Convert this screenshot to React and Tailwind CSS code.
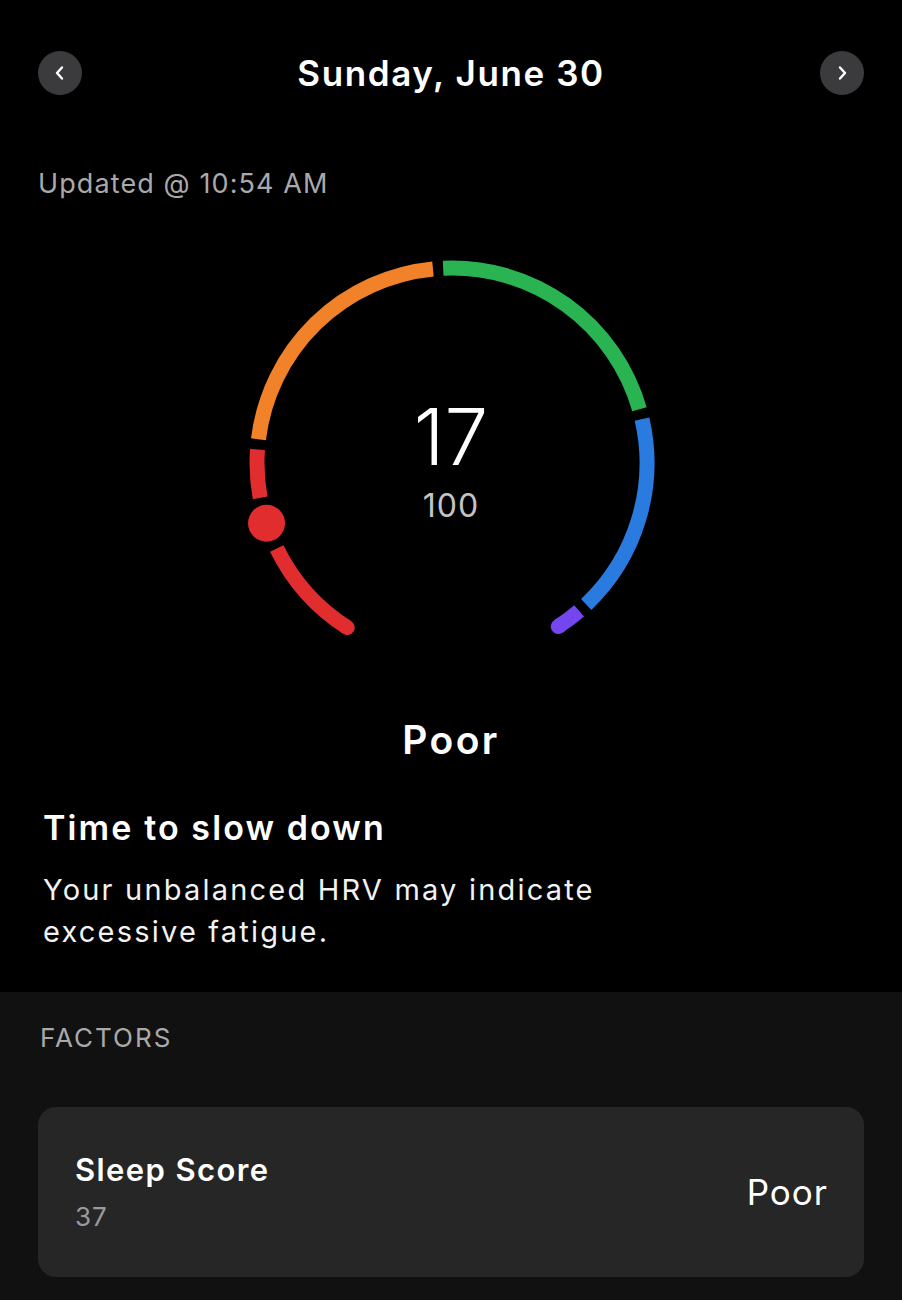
import React from "react";

const CX = 221;
const CY = 223;
const R = 195;

function pt(deg) {
  const r = (deg * Math.PI) / 180;
  return [CX + R * Math.sin(r), CY - R * Math.cos(r)];
}

function arc(a1, a2) {
  const [x1, y1] = pt(a1);
  const [x2, y2] = pt(a2);
  const large = a2 - a1 > 180 ? 1 : 0;
  return `M ${x1.toFixed(2)} ${y1.toFixed(2)} A ${R} ${R} 0 ${large} 1 ${x2.toFixed(2)} ${y2.toFixed(2)}`;
}

function Gauge() {
  const sw = 15;
  const dot = pt(-108);
  return (
    <svg width="440" height="420" viewBox="0 0 440 420" className="block">
      <path d={arc(-147.5, -116)} stroke="#e22d2f" strokeWidth={sw} fill="none" strokeLinecap="butt" />
      <path d={arc(-147.5, -147)} stroke="#e22d2f" strokeWidth={sw} fill="none" strokeLinecap="round" />
      <path d={arc(-100.3, -86)} stroke="#e22d2f" strokeWidth={sw} fill="none" />
      <path d={arc(-83, -5.6)} stroke="#f2822a" strokeWidth={sw} fill="none" />
      <path d={arc(-2.6, 74)} stroke="#29b451" strokeWidth={sw} fill="none" />
      <path d={arc(77, 136.5)} stroke="#2a7be0" strokeWidth={sw} fill="none" />
      <path d={arc(139.3, 147)} stroke="#7446ee" strokeWidth={sw} fill="none" strokeLinecap="butt" />
      <path d={arc(146.5, 147)} stroke="#7446ee" strokeWidth={sw} fill="none" strokeLinecap="round" />
      <circle cx={dot[0]} cy={dot[1]} r="18.5" fill="#e22d2f" />
    </svg>
  );
}

function NavButton({ dir }) {
  return (
    <button className="w-[44px] h-[44px] rounded-full bg-[#3b3b3d] flex items-center justify-center">
      <svg width="14" height="16" viewBox="0 0 14 16">
        {dir === "left" ? (
          <path d="M9 2.5 L4 8 L9 13.5" stroke="#ffffff" strokeWidth="2.4" fill="none" strokeLinecap="round" strokeLinejoin="round" />
        ) : (
          <path d="M5 2.5 L10 8 L5 13.5" stroke="#ffffff" strokeWidth="2.4" fill="none" strokeLinecap="round" strokeLinejoin="round" />
        )}
      </svg>
    </button>
  );
}

export default function App() {
  return (
    <div
      className="w-full min-h-[1300px] bg-black text-white flex flex-col"
      style={{ fontFamily: "Inter, 'Noto Sans', sans-serif" }}
    >
      <div className="flex items-center justify-between px-[38px] pt-[51px]">
        <NavButton dir="left" />
        <div className="text-[35px] leading-[44px] font-semibold tracking-[1.6px]">Sunday, June 30</div>
        <NavButton dir="right" />
      </div>

      <div className="mt-[71px] px-[38px] text-[27px] leading-[36px] text-[#a9a9ab] tracking-[1.1px]">Updated @ 10:54 AM</div>

      <div className="mt-[38px] flex justify-center">
        <div className="relative w-[440px] h-[420px]">
          <Gauge />
          <div className="absolute left-0 right-0 top-[153px] flex flex-col items-center">
            <div className="text-[78px] leading-[88px] font-light tracking-[0px]">17</div>
            <div className="text-[32px] leading-[36px] text-[#c4c4c6] mt-[7px] tracking-[1px]">100</div>
          </div>
        </div>
      </div>

      <div className="mt-[56px] text-center text-[39px] leading-[48px] font-semibold tracking-[2.4px]">Poor</div>

      <div className="mt-[42px] px-[43px] text-[34px] leading-[44px] font-semibold tracking-[2.1px]">Time to slow down</div>
      <div className="mt-[19px] px-[43px] text-[29px] leading-[42px] text-[#f2f2f2] tracking-[2.2px] mb-[39px]">
        Your unbalanced HRV may indicate
        <br />
        excessive fatigue.
      </div>

      <div className="flex-1 bg-[#111111] pt-[29px] pb-[22px]">
        <div className="px-[40px] text-[26px] leading-[34px] text-[#a9a9ab] tracking-[2px]">FACTORS</div>
        <div className="mt-[52px] mx-[38px] h-[170px] rounded-[18px] bg-[#262626] flex items-center justify-between pl-[37px] pr-[36px]">
          <div className="flex flex-col">
            <div className="text-[31px] leading-[40px] font-semibold tracking-[1.4px]">Sleep Score</div>
            <div className="mt-[10px] text-[26px] leading-[34px] text-[#9a9a9c] tracking-[1px]">37</div>
          </div>
          <div className="text-[35px] leading-[44px] tracking-[1px]">Poor</div>
        </div>
      </div>
    </div>
  );
}
